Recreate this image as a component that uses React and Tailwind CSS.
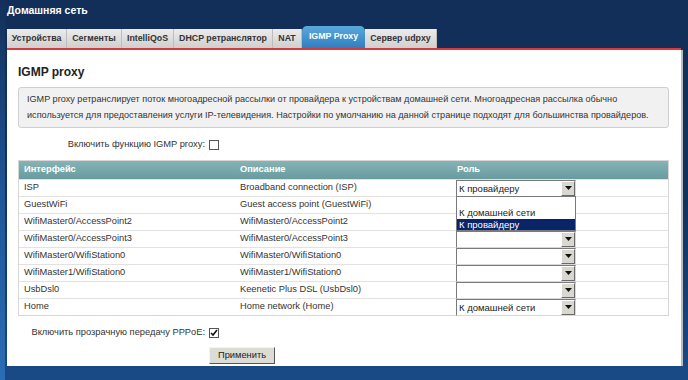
const tabs = [
  { label: 'Устройства', w: 'w-[60px]' },
  { label: 'Сегменты', w: 'w-[55px]' },
  { label: 'IntelliQoS', w: 'w-[52px]' },
  { label: 'DHCP ретранслятор', w: 'w-[99px]' },
  { label: 'NAT', w: 'w-[29px]' },
  { label: 'IGMP Proxy', w: 'w-[63px]', active: true },
  { label: 'Сервер udpxy', w: 'w-[72px]' },
];

const rows = [
  { name: 'ISP', desc: 'Broadband connection (ISP)', role: 'К провайдеру' },
  { name: 'GuestWiFi', desc: 'Guest access point (GuestWiFi)', role: null },
  { name: 'WifiMaster0/AccessPoint2', desc: 'WifiMaster0/AccessPoint2', role: null },
  { name: 'WifiMaster0/AccessPoint3', desc: 'WifiMaster0/AccessPoint3', role: '' },
  { name: 'WifiMaster0/WifiStation0', desc: 'WifiMaster0/WifiStation0', role: '' },
  { name: 'WifiMaster1/WifiStation0', desc: 'WifiMaster1/WifiStation0', role: '' },
  { name: 'UsbDsl0', desc: 'Keenetic Plus DSL (UsbDsl0)', role: '' },
  { name: 'Home', desc: 'Home network (Home)', role: 'К домашней сети' },
];

function Select({ value }) {
  return (
    <div className="w-[120px] h-[17px] flex bg-white border border-t-[#7a7a7a] border-l-[#7a7a7a] border-r-[#d8d8d8] border-b-[#d8d8d8]">
      <div className="flex-1 text-[9.5px] leading-[15px] pl-[2px] text-[#222]">{value}</div>
      <div className="w-[14px] h-[15px] bg-[#d8d8d0] border border-t-white border-l-white border-r-[#6a6a6a] border-b-[#6a6a6a] flex items-center justify-center">
        <svg width="7" height="4" viewBox="0 0 7 4">
          <path d="M0 0h7L3.5 4z" fill="#111" />
        </svg>
      </div>
    </div>
  );
}

function Checkbox({ checked }) {
  return (
    <div className="w-[10px] h-[10px] border border-[#555] bg-white flex items-center justify-center">
      {checked && (
        <svg width="8" height="8" viewBox="0 0 8 8">
          <path d="M1 4l2 2 4-5" stroke="#111" strokeWidth="1.6" fill="none" />
        </svg>
      )}
    </div>
  );
}

export default function App() {
  return (
    <div className="w-[688px] h-[380px] flex overflow-hidden bg-gradient-to-b from-[#112f58] via-[#12315c] to-[#1a4a86] font-[family-name:Liberation_Sans,Arial,sans-serif]">
      <div className="w-[5px] bg-gradient-to-b from-[#12305a] via-[#1d5596] to-[#2b6db4]" />
      <div className="ml-[2px] flex flex-col">
        <div className="h-[26px] pt-[3px] text-[10.5px] font-bold text-white">Домашняя сеть</div>

        <div className="h-[22px] flex items-end">
          {tabs.map((t) =>
            t.active ? (
              <div
                key={t.label}
                className={`${t.w} h-[22px] flex items-center justify-center rounded-t-[5px] bg-gradient-to-b from-[#5aa9dc] to-[#2f7fc0] text-white text-[8.8px] font-bold`}
              >
                {t.label}
              </div>
            ) : (
              <div
                key={t.label}
                className={`${t.w} h-[19px] flex items-center justify-center bg-gradient-to-b from-[#ececec] to-[#cfcfcf] border-r border-[#bdbdbd] text-[#333] text-[8.8px] font-bold`}
              >
                {t.label}
              </div>
            )
          )}
        </div>

        <div className="w-[674px] h-[2px] bg-[#d53b3b]" />

        <div className="w-[676px] h-[316px] flex">
          <div className="w-[674px] h-full bg-white pl-[11px] flex flex-col">
            <div className="mt-[15px] text-[12px] font-bold text-[#222] leading-[14px]">IGMP proxy</div>

            <div className="mt-[8px] w-[651px] h-[41px] bg-[#f1f1f1] border border-[#cfcfcf] rounded-[3px] px-[8px] pt-[3px] text-[9.1px] leading-[16px] text-[#333]">
              IGMP proxy ретранслирует поток многоадресной рассылки от провайдера к устройствам домашней сети. Многоадресная рассылка обычно используется для предоставления услуги IP-телевидения. Настройки по умолчанию на данной странице подходят для большинства провайдеров.
            </div>

            <div className="mt-[10px] flex items-center h-[13px]">
              <div className="w-[187px] text-right text-[9.3px] text-[#333]">Включить функцию IGMP proxy:</div>
              <div className="ml-[4px]"><Checkbox /></div>
            </div>

            <div className="mt-[9px] w-[651px] border border-[#d6d6d6] relative">
              <div className="h-[18px] flex items-center bg-gradient-to-b from-[#86b3b5] to-[#689b9f] text-white text-[9.3px] font-bold">
                <div className="w-[216px] pl-[5px]">Интерфейс</div>
                <div className="w-[217px] pl-[5px]">Описание</div>
                <div className="flex-1 pl-[5px]">Роль</div>
              </div>
              {rows.map((r) => (
                <div key={r.name} className="h-[17px] flex items-center border-t border-[#e2e2e2] text-[9.3px] text-[#333]">
                  <div className="w-[216px] pl-[5px]">{r.name}</div>
                  <div className="w-[217px] pl-[5px]">{r.desc}</div>
                  <div className="flex-1 pl-[4px]">{r.role !== null && <Select value={r.role} />}</div>
                </div>
              ))}

              <div className="absolute left-[437px] top-[35px] w-[120px] h-[35px] bg-white border border-[#7a7a7a] text-[9.5px] text-[#222] flex flex-col">
                <div className="h-[10px]" />
                <div className="h-[12px] leading-[12px] pl-[2px]">К домашней сети</div>
                <div className="h-[11px] leading-[11px] pl-[2px] bg-[#0a246a] text-white">К провайдеру</div>
              </div>
            </div>

            <div className="mt-[10px] flex items-center h-[13px]">
              <div className="w-[187px] text-right text-[9.3px] text-[#333]">Включить прозрачную передачу PPPoE:</div>
              <div className="ml-[4px]"><Checkbox checked /></div>
            </div>

            <div className="mt-[8px] flex">
              <div className="w-[191px]" />
              <div className="w-[66px] h-[17px] bg-[#dcdcd4] border border-t-[#f4f4f4] border-l-[#f4f4f4] border-r-[#555] border-b-[#555] text-[9.3px] text-[#222] flex items-center justify-center">
                Применить
              </div>
            </div>
          </div>
          <div className="w-[2px] h-full bg-[#b8bcc4]" />
        </div>
      </div>
    </div>
  );
}
